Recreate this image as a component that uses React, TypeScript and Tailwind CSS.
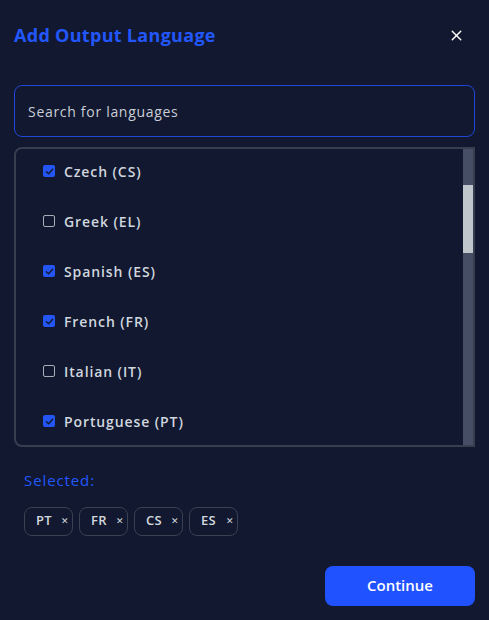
import { X } from "lucide-react";

const LANGS = [
  { name: "Czech", code: "CS", checked: true },
  { name: "Greek", code: "EL", checked: false },
  { name: "Spanish", code: "ES", checked: true },
  { name: "French", code: "FR", checked: true },
  { name: "Italian", code: "IT", checked: false },
  { name: "Portuguese", code: "PT", checked: true },
];

const SELECTED = ["PT", "FR", "CS", "ES"];

function Check({ on }: { on: boolean }) {
  if (!on) {
    return <span className="w-[12px] h-[12px] rounded-[2px] border border-[#a7adb8] flex-shrink-0" />;
  }
  return (
    <span className="w-[12px] h-[12px] rounded-[2px] bg-[#2456f5] flex items-center justify-center flex-shrink-0">
      <svg width="9" height="9" viewBox="0 0 10 10" fill="none">
        <path d="M1.5 5.2 L4 7.5 L8.5 2.5" stroke="#121a33" strokeWidth="1.6" strokeLinecap="round" strokeLinejoin="round" />
      </svg>
    </span>
  );
}

export default function App() {
  return (
    <div
      className="w-[489px] h-[620px] bg-[#111830] px-[14px] pt-[21px] flex flex-col"
      style={{ fontFamily: "'Open Sans', 'Liberation Sans', sans-serif" }}
    >
      <div className="flex items-center justify-between h-[28px]">
        <h1 className="text-[18px] font-bold text-[#2357fb] tracking-[0.3px]">Add Output Language</h1>
        <X className="w-[17px] h-[17px] text-white mr-[10px]" strokeWidth={2} />
      </div>

      <div className="mt-[36px] h-[52px] rounded-lg border border-[#2148d6] flex items-center px-[13px]">
        <span className="text-[14px] text-[#c9ced6] tracking-[0.7px]">Search for languages</span>
      </div>

      <div className="mt-[10px] h-[300px] flex border-2 border-[#363e50] rounded-l-lg overflow-hidden">
        <div className="flex-1 overflow-hidden">
          <div className="-mt-[3px]">
            {LANGS.map((l) => (
              <div key={l.code} className="h-[50px] flex items-center pl-[27px] gap-[9px]">
                <Check on={l.checked} />
                <span className="text-[14px] font-semibold text-[#d0d6dd] tracking-[0.9px]">
                  {l.name} ({l.code})
                </span>
              </div>
            ))}
          </div>
        </div>
        <div className="w-[10px] bg-[#454e64] flex flex-col">
          <div className="h-[36px]" />
          <div className="h-[68px] bg-[#bfc6cc]" />
        </div>
      </div>

      <p className="mt-[22px] ml-[10px] text-[15px] text-[#2357fb] tracking-[0.9px]">Selected:</p>

      <div className="mt-[15px] ml-[10px] flex gap-[6px]">
        {SELECTED.map((c) => (
          <div
            key={c}
            className="w-[49px] h-[29px] rounded-lg border border-[#394152] flex items-center pl-[11px]"
          >
            <span className="text-[13px] font-semibold text-[#d3d8de] w-[25px] tracking-[0.3px]">{c}</span>
            <span className="text-[9px] text-[#d3d8de]">✕</span>
          </div>
        ))}
      </div>

      <div className="mt-[30px] flex justify-end">
        <button className="w-[150px] h-[40px] rounded-lg bg-[#2152ff] text-white text-[15px] font-semibold">
          Continue
        </button>
      </div>
    </div>
  );
}
